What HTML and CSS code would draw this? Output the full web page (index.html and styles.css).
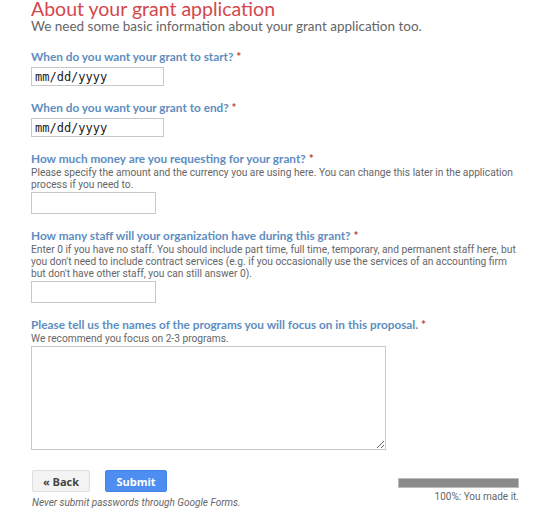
FILE: index.html
```html
<!DOCTYPE html>
<html lang="en">
<head>
    <meta charset="UTF-8">
    <meta name="viewport" content="width=device-width, initial-scale=1.0">
    <title>About your grant application</title>
    <link rel="stylesheet" href="styles.css">
</head>
<body>
    <div class="form">
        <div class="header">
            <h1 class="title">About your grant application</h1>
            <p class="subtitle">We need some basic information about your grant application too.</p>
        </div>

        <div class="item">
            <label class="label" for="start">When do you want your grant to start? <span class="req">*</span></label>
            <input class="date" type="text" id="start" value="mm/dd/yyyy">
        </div>

        <div class="item">
            <label class="label" for="end">When do you want your grant to end? <span class="req">*</span></label>
            <input class="date" type="text" id="end" value="mm/dd/yyyy">
        </div>

        <div class="item">
            <label class="label" for="money">How much money are you requesting for your grant? <span class="req">*</span></label>
            <p class="help">Please specify the amount and the currency you are using here. You can change this later in the application process if you need to.</p>
            <input class="short" type="text" id="money">
        </div>

        <div class="item">
            <label class="label" for="staff">How many staff will your organization have during this grant? <span class="req">*</span></label>
            <p class="help">Enter 0 if you have no staff. You should include part time, full time, temporary, and permanent staff here, but you don't need to include contract services (e.g. if you occasionally use the services of an accounting firm but don't have other staff, you can still answer 0).</p>
            <input class="short" type="text" id="staff">
        </div>

        <div class="item">
            <label class="label" for="programs">Please tell us the names of the programs you will focus on in this proposal. <span class="req">*</span></label>
            <p class="help">We recommend you focus on 2-3 programs.</p>
            <textarea class="long" id="programs"></textarea>
        </div>

        <div class="nav">
            <div class="nav-left">
                <div class="buttons">
                    <button class="btn back" type="button">&laquo; Back</button>
                    <button class="btn submit" type="button">Submit</button>
                </div>
                <p class="warning">Never submit passwords through Google Forms.</p>
            </div>
            <div class="progress">
                <div class="bar"></div>
                <p class="progress-text">100%: You made it.</p>
            </div>
        </div>
    </div>
</body>
</html>
```

FILE: styles.css
```css
body {
    margin: 0;
    background: #fff;
    font-family: Roboto, Arial, sans-serif;
}
.form {
    width: 490px;
    padding: 0 27px 0 31px;
}
.header {
    margin-bottom: 16px;
}
.title {
    margin: 0;
    font-family: Lato, "Open Sans", sans-serif;
    font-weight: 400;
    font-size: 19.5px;
    line-height: 18px;
    color: #d4474d;
}
.subtitle {
    margin: 0;
    font-family: Lato, "Open Sans", sans-serif;
    font-size: 13.5px;
    line-height: 16px;
    color: #666;
}
.item {
    margin-bottom: 15px;
}
.label {
    display: block;
    font-family: Lato, "Open Sans", sans-serif;
    font-weight: 700;
    font-size: 11.8px;
    line-height: 14px;
    color: #5d8dc0;
    margin-bottom: 3px;
}
.req {
    color: #c53b3b;
}
.help {
    margin: -2px 0 1px 0;
    font-size: 10.2px;
    line-height: 12px;
    color: #666;
}
input, textarea {
    box-sizing: border-box;
    border: 1px solid #c8c8c8;
    background: #fff;
    margin: 0;
    display: block;
}
.date {
    width: 133px;
    height: 19px;
    padding: 0 3px;
    font-family: "DejaVu Sans Mono", monospace;
    font-size: 12px;
    color: #222;
}
.short {
    width: 125px;
    height: 22px;
}
.long {
    width: 355px;
    height: 104px;
    resize: both;
}
.nav {
    display: flex;
    justify-content: space-between;
    margin-top: 20px;
}
.nav-left {
    padding-left: 1px;
}
.buttons {
    display: flex;
    gap: 15px;
}
.btn {
    height: 22px;
    border-radius: 2px;
    font-family: "Open Sans", Arial, sans-serif;
    font-weight: 700;
    font-size: 11px;
    cursor: pointer;
}
.back {
    width: 58px;
    background: #f3f3f3;
    border: 1px solid #e0e0e0;
    color: #444;
}
.submit {
    width: 62px;
    background: #4d8ef0;
    border: 1px solid #4282e8;
    color: #fff;
}
.warning {
    margin: 5px 0 0 0;
    font-size: 10px;
    line-height: 12px;
    font-style: italic;
    color: #666;
}
.progress {
    width: 121px;
    padding-top: 8px;
    margin-right: 2px;
}
.bar {
    height: 8px;
    background: #8a8a8a;
    border: 1px solid #bbb;
}
.progress-text {
    margin: 3px 0 0 0;
    text-align: right;
    font-size: 10px;
    line-height: 12px;
    color: #666;
}
```
